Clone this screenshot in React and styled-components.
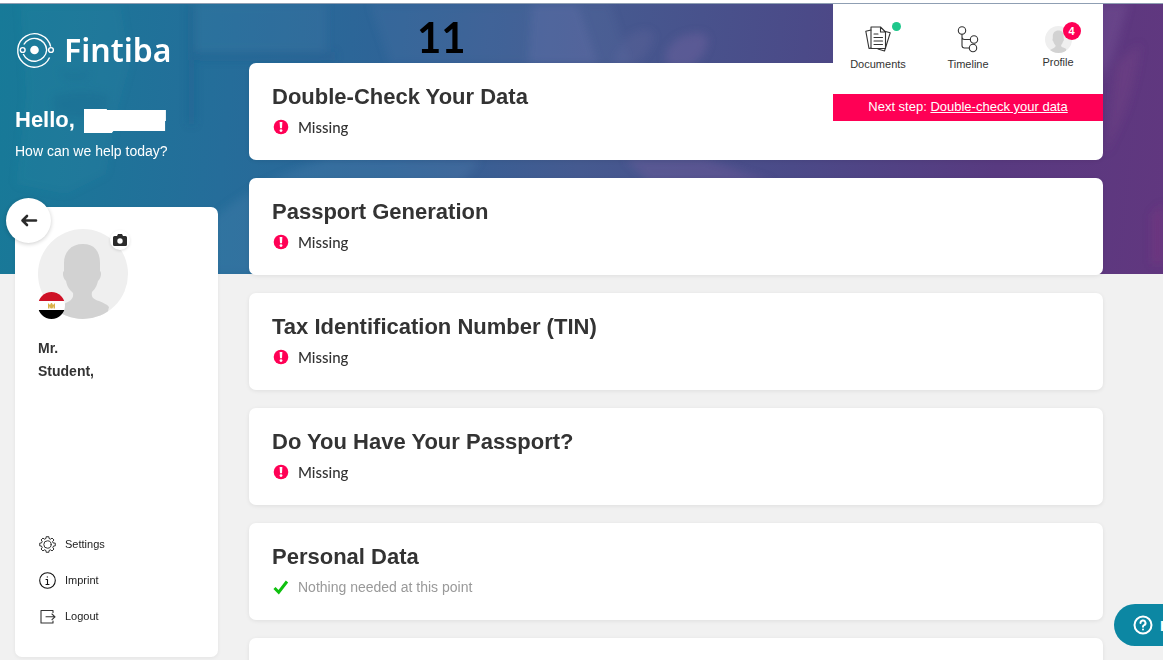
import React from 'react';
import styled, { createGlobalStyle } from 'styled-components';

const Global = createGlobalStyle`
  * { box-sizing: border-box; }
  body {
    margin: 0;
    background: #f1f1f1;
    color: #333;
    font-family: "Liberation Sans", Arial, sans-serif;
  }
  h1, h2, p, ul { margin: 0; padding: 0; }
  ul { list-style: none; }
  button { font: inherit; border: 0; cursor: pointer; padding: 0; }
  a { color: inherit; text-decoration: none; }
`;

const Page = styled.div`
  position: relative;
  height: 100vh;
  overflow: hidden;
  border-top: 3px solid #fff;
  display: grid;
  grid-template-columns: 203px minmax(0, 1fr);
  column-gap: 31px;
  padding: 0 60px 0 15px;
`;

const Hero = styled.div`
  position: absolute;
  inset: 0 0 auto;
  height: 271px;
  border-top: 1px solid #8f9fb3;
  background: linear-gradient(96deg, #177a98 0%, #256d9a 20%, #2f6397 34%, #455a90 50%, #4b4a88 68%, #583a80 85%, #61377f 100%);
  svg { display: block; width: 100%; height: 100%; }
`;

const Side = styled.div`
  position: relative;
  display: flex;
  flex-direction: column;
  color: #fff;
`;

const Brand = styled.a`
  display: flex;
  align-items: center;
  gap: 8px;
  height: 44px;
  margin-top: 25px;
  font: 600 32px/44px "Noto Sans", sans-serif;
`;

const Hello = styled.h1`
  display: flex;
  align-items: center;
  gap: 9px;
  margin-top: 34px;
  font-size: 22px;
  line-height: 28px;
`;

const NameMask = styled.span`
  width: 82px;
  height: 24px;
  margin-top: 2px;
  background: #fff;
  clip-path: polygon(0 0, 28% 0, 28% 4%, 100% 4%, 100% 50%, 99% 50%, 99% 92%, 36% 92%, 34% 100%, 0 100%);
`;

const Lead = styled.p`
  margin-top: 7px;
  font-size: 14px;
  line-height: 20px;
`;

const ProfileCard = styled.aside`
  position: relative;
  display: flex;
  flex-direction: column;
  justify-content: space-between;
  height: 450px;
  margin-top: 46px;
  padding: 22px 23px 31px;
  background: #fff;
  color: #333;
  border-radius: 7px;
  box-shadow: 0 1px 4px rgba(0, 0, 0, 0.06);
`;

const Back = styled.button`
  position: absolute;
  top: -9px;
  left: -9px;
  display: grid;
  place-items: center;
  width: 45px;
  height: 45px;
  border-radius: 50%;
  background: #fff;
  box-shadow: 0 1px 4px rgba(0, 0, 0, 0.2);
`;

const Avatar = styled.div`
  position: relative;
  width: 90px;
  height: 90px;
`;

const Camera = styled.button`
  position: absolute;
  top: 1px;
  right: -2px;
  display: grid;
  place-items: center;
  width: 20px;
  height: 20px;
  border-radius: 50%;
  background: #fff;
  box-shadow: 0 1px 3px rgba(0, 0, 0, 0.12);
`;

const Flag = styled.svg`
  position: absolute;
  left: 0;
  bottom: 0;
`;

const Person = styled.p`
  margin-top: 18px;
  font-size: 14px;
  font-weight: 700;
  line-height: 23px;
`;

const Links = styled.ul`
  display: flex;
  flex-direction: column;
  gap: 16px;
`;

const SideLink = styled.a`
  display: flex;
  align-items: center;
  gap: 9px;
  height: 20px;
  font-size: 11px;
  color: #222;
`;

const Main = styled.main`
  position: relative;
  display: flex;
  flex-direction: column;
  gap: 18px;
  padding-top: 60px;
`;

const Card = styled.section`
  flex: none;
  height: 97px;
  padding: 20px 23px;
  background: #fff;
  border-radius: 7px;
  box-shadow: 0 1px 4px rgba(0, 0, 0, 0.08);
`;

const Title = styled.h2`
  font-size: 22px;
  line-height: 28px;
`;

const Status = styled.p`
  display: flex;
  align-items: center;
  gap: 9px;
  margin-top: 6px;
  line-height: 20px;
  font-size: ${(p) => (p.$done ? '14px' : '15px')};
  font-family: ${(p) => (p.$done ? 'inherit' : 'Lato, sans-serif')};
  font-weight: ${(p) => (p.$done ? 400 : 500)};
  color: ${(p) => (p.$done ? '#999' : '#333')};
`;

const TopPanel = styled.div`
  position: absolute;
  top: 1px;
  right: 60px;
  width: 270px;
  background: #fff;
`;

const Nav = styled.nav`
  display: grid;
  grid-template-columns: repeat(3, 1fr);
  height: 90px;
  padding-top: 20px;
`;

const NavItem = styled.a`
  display: flex;
  flex-direction: column;
  align-items: center;
  gap: ${(p) => (p.$tight ? '0' : '2px')};
  font-size: 11px;
  line-height: 16px;
`;

const NavIcon = styled.span`
  position: relative;
  display: grid;
  place-items: center;
  height: 30px;
`;

const Dot = styled.i`
  position: absolute;
  top: -2px;
  right: -10px;
  width: 9px;
  height: 9px;
  border-radius: 50%;
  background: #1ec78b;
`;

const Badge = styled.b`
  position: absolute;
  top: -2px;
  right: -9px;
  width: 18px;
  height: 18px;
  border-radius: 50%;
  background: #ff0055;
  color: #fff;
  font-size: 11px;
  line-height: 18px;
  text-align: center;
`;

const NextStep = styled.p`
  height: 27px;
  background: #ff0055;
  color: #fff;
  font-size: 13px;
  line-height: 25px;
  text-align: center;
  a { text-decoration: underline; }
`;

const StepNumber = styled.span`
  position: absolute;
  top: 9px;
  left: 417px;
  color: #000;
  font: 700 42px/50px Lato, sans-serif;
`;

const Help = styled.button`
  position: absolute;
  right: -41px;
  bottom: 14px;
  display: flex;
  align-items: center;
  gap: 7px;
  width: 90px;
  height: 42px;
  padding-left: 19px;
  border-radius: 21px;
  background: #0c87a3;
  color: #fff;
  font-size: 15px;
  font-weight: 700;
`;

const BrandMark = () => (
  <svg width="41" height="40" viewBox="0 0 41 40" fill="none" stroke="#fff" strokeWidth="1.4">
    <path d="M35.7 16.600A16.700 16.700 0 1 0 34.600 27.500" />
    <path d="M8.800 14.500A12.300 12.300 0 0 1 31.700 20a12.300 12.300 0 0 1-23.500 4" />
    <circle cx="19.500" cy="20" r="4.300" fill="#fff" stroke="none" />
    <circle cx="7.700" cy="20" r="2.400" fill="#24749a" />
    <circle cx="36" cy="20" r="2.400" fill="#24749a" />
  </svg>
);

const Silhouette = ({ size }) => (
  <svg width={size} height={size} viewBox="0 0 90 90">
    <defs>
      <clipPath id={`round${size}`}><circle cx="45" cy="45" r="45" /></clipPath>
    </defs>
    <g clipPath={`url(#round${size})`}>
      <rect width="90" height="90" fill="#efefef" />
      <path fill="#d2d2d2" d="M45 15c-12 0-19 8-19 19v8c-2 1-1 8 2 10 1 6 4 9 7 12 1 6-3 8-9 11-7 3-10 5-11 9l12 10h40l4-16c-2-3-6-4-10-6-6-2-8-4-7-9 4-4 5-7 6-11 3-2 4-9 2-10v-8c0-12-6-19-17-19z" />
    </g>
  </svg>
);

const Missing = () => (
  <svg width="17" height="16" viewBox="0 0 17 16">
    <circle cx="9" cy="8" r="7.3" fill="#ff0055" />
    <path d="M7.6 3h2.800l-.4 6.200h-2z" fill="#fff" />
    <circle cx="9" cy="11.600" r="1.400" fill="#fff" />
  </svg>
);

const Check = () => (
  <svg width="17" height="16" viewBox="0 0 17 16" fill="none" stroke="#0fc00f" strokeWidth="3">
    <path d="M2.500 9 6.700 13.200 15 2.500" />
  </svg>
);

const line = { fill: 'none', stroke: '#333', strokeWidth: 1.1, strokeLinejoin: 'round', strokeLinecap: 'round' };

const Docs = () => (
  <svg width="26" height="26" viewBox="0 0 26 26" {...line}>
    <path d="M6 4 .8 5.200 4 22.500l2-.4M20.500 5.500l4.700 1.300L19.500 25l-6.500-2" />
    <path d="M6 1h9.500l5 5v16.500H6zM15.500 1v5h5M9 8h4M9 11.500h8.500M9 15h8.500M9 18.500h8.500" />
  </svg>
);

const Branch = () => (
  <svg width="22" height="27" viewBox="0 0 22 27" {...line}>
    <circle cx="5" cy="4.500" r="3.700" />
    <circle cx="17" cy="13.500" r="3.700" />
    <circle cx="16" cy="22" r="3.700" />
    <path d="M5 8.200v11.300q0 2.500 2.500 2.500h4.800M5 11q0 2.500 2.500 2.500h5.800" />
  </svg>
);

const teeth = Array.from({ length: 8 }, (_, i) => {
  const at = (deg, r) => {
    const a = ((i * 45 + deg) * Math.PI) / 180;
    return `${(8.5 + r * Math.cos(a)).toFixed(2)} ${(8.5 + r * Math.sin(a)).toFixed(2)}`;
  };
  return `${at(-14, 6.2)} L${at(-10, 7.9)} L${at(10, 7.9)} L${at(14, 6.2)}`;
}).join(' L');

const Gear = () => (
  <svg width="18" height="17" viewBox="-1 0 18 17" {...line} strokeWidth="1">
    <path d={`M${teeth}Z`} />
    <circle cx="8.500" cy="8.500" r="3.700" />
  </svg>
);

const Info = () => (
  <svg width="18" height="17" viewBox="-1 0 18 17" {...line} stroke="#111">
    <circle cx="8.500" cy="8.500" r="7.800" />
    <path d="M7 7.500h1.500v5M7 12.500h3M8.300 4.800v.3" />
  </svg>
);

const Exit = () => (
  <svg width="18" height="17" viewBox="-1 0 18 17" {...line}>
    <path d="M14 4.500v-2H2v12.500h12v-2M7 8.800h9M13 6l3 2.800-3 2.800" />
  </svg>
);

const cards = [
  { title: 'Double-Check Your Data' },
  { title: 'Passport Generation' },
  { title: 'Tax Identification Number (TIN)' },
  { title: 'Do You Have Your Passport?' },
  { title: 'Personal Data', done: true },
];

export default function App() {
  return (
    <>
      <Global />
      <Page>
        <Hero>
          <svg viewBox="0 0 1163 270" preserveAspectRatio="none" aria-hidden="true">
            <defs>
              <filter id="soft"><feGaussianBlur stdDeviation="4" /></filter>
            </defs>
            <g filter="url(#soft)">
              <path d="M20 0h100l10 60-14 50-10 60-40 20-50-10 10-90z" fill="#3fa0b0" opacity=".1" />
              <path d="M52 92q30-10 58 0l-4 18q-26 8-52 0z" fill="#0d5f88" opacity=".22" />
              <path d="M58 62q14 16 34 2l-6 12h-22z" fill="#0d5f88" opacity=".2" />
              <path d="M188 0h7v120h-7zM195 48h140v8H195z" fill="#1d4f85" opacity=".28" />
              <path d="M196 0h130v48H196z" fill="#5b86b4" opacity=".14" />
              <path d="M170 270Q210 190 330 154l150 2-40 50-60 66z" fill="#5f92ba" opacity=".2" />
              <path d="M370 0h240l20 60H390z" fill="#6f86b8" opacity=".12" />
              <path d="M532 0h46l20 60h-70z" fill="#7f7fb8" opacity=".2" />
              <path d="M612 60l14-26q18-14 28-4 0 16-20 32z" fill="#9080b8" opacity=".12" />
              <path d="M668 62q-8-14 10-28 24-10 30 0 0 18-20 30z" fill="#8a6cae" opacity=".28" />
              <path d="M625 155h80l70 24H650z" fill="#8060a0" opacity=".3" />
              <path d="M1100 0h28l-14 50-14 30z" fill="#7a5a9c" opacity=".35" />
              <path d="M1116 60q16-14 24-20-2 30-16 70l-18 40z" fill="#7d4a88" opacity=".3" />
              <path d="M1152 210l11-10v60h-11z" fill="#8a3a80" opacity=".3" />
            </g>
          </svg>
        </Hero>

        <Side>
          <Brand href="#home"><BrandMark />Fintiba</Brand>
          <Hello>Hello, <NameMask /></Hello>
          <Lead>How can we help today?</Lead>
          <ProfileCard>
            <Back aria-label="Back">
              <svg width="18" height="16" viewBox="0 0 18 16" fill="none" stroke="#2b2b2b" strokeWidth="2.600" strokeLinecap="round" strokeLinejoin="round">
                <path d="M16 7.500H3M7 3 2.500 7.500 7 12" />
              </svg>
            </Back>
            <div>
              <Avatar>
                <Silhouette size={90} />
                <Camera aria-label="Change photo">
                  <svg width="14" height="12" viewBox="0 0 14 12" fill="#2b2b2b">
                    <path fillRule="evenodd" d="M1.500 2H4l1-2h4l1 2h2.500Q14 2 14 3.500v7q0 1.500-1.500 1.500h-11Q0 12 0 10.500v-7Q0 2 1.500 2zM7 4.300a2.700 2.700 0 1 0 0 5.400 2.700 2.700 0 0 0 0-5.400z" />
                  </svg>
                </Camera>
                <Flag width="27" height="27" viewBox="0 0 27 27">
                  <defs><clipPath id="flag"><circle cx="13.500" cy="13.500" r="13.500" /></clipPath></defs>
                  <g clipPath="url(#flag)">
                    <rect width="27" height="27" fill="#fff" />
                    <rect width="27" height="9" fill="#ce1126" />
                    <rect y="18" width="27" height="9" fill="#000" />
                    <path d="M10 11l2 2 1-2h1l1 2 2-2v5.500h-1.500V14l-1 2.500h-2l-1-2.500v2.500H10z" fill="#d9b24a" />
                  </g>
                </Flag>
              </Avatar>
              <Person>Mr.<br />Student,</Person>
            </div>
            <Links>
              <li><SideLink href="#settings"><Gear />Settings</SideLink></li>
              <li><SideLink href="#imprint"><Info />Imprint</SideLink></li>
              <li><SideLink href="#logout"><Exit />Logout</SideLink></li>
            </Links>
          </ProfileCard>
        </Side>

        <Main>
          {cards.map((c) => (
            <Card key={c.title}>
              <Title>{c.title}</Title>
              <Status $done={c.done}>
                {c.done ? <Check /> : <Missing />}
                {c.done ? 'Nothing needed at this point' : 'Missing'}
              </Status>
            </Card>
          ))}
          <Card />
        </Main>

        <StepNumber>11</StepNumber>

        <TopPanel>
          <Nav>
            <NavItem href="#documents"><NavIcon><Docs /><Dot /></NavIcon>Documents</NavItem>
            <NavItem href="#timeline"><NavIcon><Branch /></NavIcon>Timeline</NavItem>
            <NavItem href="#profile" $tight><NavIcon><Silhouette size={27} /><Badge>4</Badge></NavIcon>Profile</NavItem>
          </Nav>
          <NextStep>Next step: <a href="#check">Double-check your data</a></NextStep>
        </TopPanel>

        <Help>
          <svg width="20" height="20" viewBox="0 0 20 20" fill="none" stroke="#fff" strokeWidth="2" strokeLinecap="round">
            <circle cx="10" cy="10" r="8.500" />
            <path d="M7.500 8a2.500 2.500 0 1 1 3.600 2.200q-1.100.5-1.100 1.600M10 14.500v.1" />
          </svg>
          Help
        </Help>
      </Page>
    </>
  );
}
